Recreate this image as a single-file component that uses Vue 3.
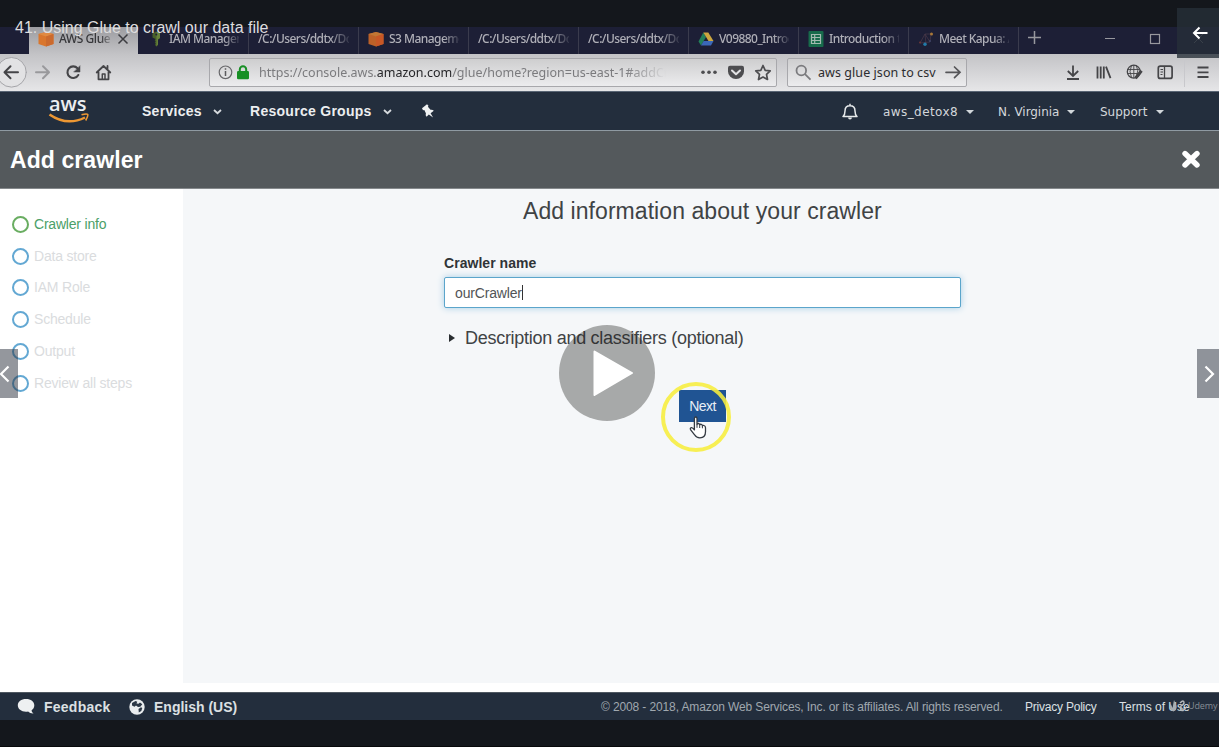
<script setup>
const tabs = [
  { label: '/C:/Users/ddtx/Dow', icon: '' },
  { label: 'S3 Managemen', icon: 'cube' },
  { label: '/C:/Users/ddtx/Dow', icon: '' },
  { label: '/C:/Users/ddtx/Dow', icon: '' },
  { label: 'V09880_Introdu', icon: 'drive' },
  { label: 'Introduction to', icon: 'sheet' },
  { label: 'Meet Kapua: A', icon: 'kapua' },
]
const steps = ['Crawler info', 'Data store', 'IAM Role', 'Schedule', 'Output', 'Review all steps']
</script>

<template>
  <div class="player">
    <div class="frame">
      <div class="tabs">
        <div class="tab active">
          <svg class="fav" viewBox="0 0 16 16"><path d="M.5 3 8 1l7.500 2v10L8 15.500.5 13z" fill="#d9762d" /><path d="M.5 3 8 5.500 15.500 3 8 1z" fill="#e08a42" /><path d="M8 5.500 15.500 3v10L8 15.500z" fill="#cb6a2e" /></svg>
          <span class="label short">AWS Glue C</span>
          <svg class="close" viewBox="0 0 12 12"><path d="M1.500 1.500l9 9m0-9l-9 9" fill="none" stroke="#3c3c40" stroke-width="1.500" /></svg>
        </div>
        <div class="tab iam">
          <svg class="fav" viewBox="0 0 16 16"><path d="M4.500 2.500 8 .5l4 2v4.500l-2 1.500v5L8.500 15.500 7 14l.7-1.500-1-1 1-1-1-1 .8-1.500-3-1.500z" fill="#48602a" /><path d="M8.500.8l3.500 1.700v4.500l-2 1.500v5l-1.500 2z" fill="#67813b" /><circle cx="8.300" cy="3.500" r="1" fill="#20213a" /></svg>
          <span class="label">IAM Managem</span>
        </div>
        <div v-for="(t, i) in tabs" :key="i" class="tab">
          <svg v-if="t.icon === 'cube'" class="fav" viewBox="0 0 16 16"><path d="M.5 3 8 1l7.500 2v10L8 15.500.5 13z" fill="#bd6128" /><path d="M.5 3 8 5.500 15.500 3 8 1z" fill="#c27634" /><path d="M8 5.500 15.500 3v10L8 15.500z" fill="#c85726" /></svg>
          <svg v-if="t.icon === 'drive'" class="fav" viewBox="0 0 16 16"><path d="M5.300 1.500 0.500 10.500 3 14.500 8 6z" fill="#22805a" /><path d="M5.300 1.500h5L15.500 10h-5z" fill="#cba63f" /><path d="M3 14.500 5.600 10h9.900L13 14.500z" fill="#3b68b8" /></svg>
          <svg v-if="t.icon === 'sheet'" class="fav" viewBox="0 0 16 16"><rect x=".5" width="15" height="16" rx="1" fill="#176b4b" /><path d="M3.500 3.500h9v9h-9zM3.500 6.500h9m-9 3h9M6.700 3.500v9" fill="none" stroke="#a3bab0" stroke-width="1.200" /></svg>
          <svg v-if="t.icon === 'kapua'" class="fav" viewBox="0 0 16 16"><path d="M2 12 7 3l5 8z M7 3l1 10 M7 3l6 0-1 8" fill="none" stroke="#4c3a49" stroke-width=".7" /><circle cx="13.500" cy="3" r="1.500" fill="#a87838" /><circle cx="7" cy="13.300" r="1.700" fill="#227ba8" /><circle cx="2" cy="11.500" r="1" fill="#6b3638" /><circle cx="12" cy="10" r="1.100" fill="#3c4164" /></svg>
          <span class="label">{{ t.label }}</span>
        </div>
        <div class="windowbar">
          <svg width="200" height="27" viewBox="1019 27 200 27" fill="none" stroke="#98989e">
            <path d="M1034.500 31v13M1028 37.500h13" stroke-width="1.500" />
            <path d="M1105 38.500h10" /><rect x="1150.500" y="34.500" width="9" height="9" stroke-width="1.200" /><path d="M1194 34l9 9m0-9l-9 9" stroke-width=".8" />
          </svg>
        </div>
      </div>

      <div class="toolbar">
        <svg class="navicons" width="209" height="37" viewBox="0 54 209 37" fill="none" stroke="#454548" stroke-width="2" stroke-linecap="round" stroke-linejoin="round">
          <circle cx="11.500" cy="72.300" r="14.800" fill="#e2e2e4" stroke="#a5a5a9" stroke-width="1" />
          <path d="M5 72.300h13M10.500 66.300l-6 6 6 6" />
          <path d="M36 72.300h12.500M43 66.300l6 6-6 6" stroke="#99999c" />
          <path d="M77.500 68.200A5.800 5.800 0 1 0 78.300 75" stroke-width="2.100" /><path d="M80 66v6h-6z" fill="#454548" stroke-width=".5" />
          <path d="M96.700 72.500l6.800-6.500 6.800 6.500M98.500 72v7.300h10v-7.300M107.500 66v2.500" stroke-width="1.800" /><path d="M102.300 79v-5h2.700v5" stroke-width="1.500" />
        </svg>
        <div class="field url">
          <svg width="48" height="27" viewBox="210 59 48 27" fill="none"><circle cx="225.500" cy="72.300" r="6.300" stroke="#68686b" stroke-width="1.200" /><path d="M225.500 71v5M225.500 68.200v1.600" stroke="#5b5b5e" stroke-width="1.500" /><rect x="237" y="71" width="12" height="8.300" rx="1.200" fill="#188f25" /><path d="M239.800 71.500v-2a3.200 3.200 0 0 1 6.400 0v2" stroke="#188f25" stroke-width="2" /></svg>
          <span class="address">https://console.aws.<b>amazon.com</b>/glue/home?region=us-east-1#addCr</span>
          <svg class="urlicons" width="84" height="27" viewBox="692 59 84 27"><g fill="#4d4d50"><circle cx="703" cy="72.300" r="1.800" /><circle cx="709" cy="72.300" r="1.800" /><circle cx="715" cy="72.300" r="1.800" /><path d="M730 65.800h12q2 0 2 2v3.700a8 7.500 0 0 1-16 0v-3.700q0-2 2-2z" /></g><path d="M732 70.500l4 3.800 4-3.800" fill="none" stroke="#e2e2e4" stroke-width="2" stroke-linecap="round" stroke-linejoin="round" /><path d="M763 65.500l2.200 4.800 5 .6-3.700 3.500 1 5.100-4.500-2.500-4.500 2.500 1-5.100-3.700-3.500 5-.6z" fill="none" stroke="#4d4d50" stroke-width="1.700" stroke-linejoin="round" /></svg>
        </div>
        <div class="field search">
          <svg width="30" height="27" viewBox="788 59 30 27" fill="none" stroke="#7b7b7e" stroke-width="1.800"><circle cx="801.300" cy="70.500" r="4.800" /><path d="M805 74.200l5.500 5.500" /></svg>
          <span class="query">aws glue json to csv</span>
          <svg width="24" height="27" viewBox="942 59 24 27" fill="none" stroke="#555558" stroke-width="1.700" stroke-linecap="round"><path d="M946 72.300h13.500M954.500 67l5.500 5.300-5.500 5.400" /></svg>
        </div>
        <svg class="actions" width="252" height="37" viewBox="967 54 252 37" fill="none" stroke="#454548" stroke-width="1.800">
          <path d="M1073 65.500v10M1067.800 71l5.200 5 5.200-5M1067 79h12" />
          <path d="M1097.500 66.500v12M1100.700 66.500v12M1103.800 66.500v12M1106 66.700l4.500 11.500" />
          <circle cx="1133.800" cy="71.700" r="6.500" stroke-width="1.300" /><path d="M1127 69.500h12.500M1127 73.500h12M1133.800 65v13M1131.500 65.500q-3 6 0 12M1136.300 65.500q3 5 0 11" stroke-width=".9" /><path d="M1141.500 70.800l-6 7.500" stroke-width="3" />
          <rect x="1158.300" y="66.200" width="13.800" height="12.200" rx="2" stroke-width="1.700" /><path d="M1164.500 66v12" stroke-width="1.300" /><path d="M1160.500 69.500h2.500m-2.500 2.500h2.500m-2.500 2.500h2" stroke-width="1" />
          <path d="M1184.500 58v29" stroke="#c8c8cc" stroke-width="1" />
          <path d="M1197.500 67.500h11M1197.500 72.300h11M1197.500 77h11" />
        </svg>
      </div>

      <div class="awsnav">
        <div class="logo">
          <span>aws</span>
          <svg width="42" height="12" viewBox="48 112 42 12" fill="none" stroke="#ed9733"><path d="M49.500 113.500q17.500 12 35.500 3" stroke-width="2.500" /><path d="M81.500 113.800q5.500-1.500 6.200-.3t-2 6" stroke-width="1.600" /></svg>
        </div>
        <span class="navlink services">Services</span>
        <svg class="chev" width="9" height="6" viewBox="0 0 9 6"><path d="M1 1l3.500 3.200L8 1" /></svg>
        <span class="navlink groups">Resource Groups</span>
        <svg class="chev" width="9" height="6" viewBox="0 0 9 6"><path d="M1 1l3.500 3.200L8 1" /></svg>
        <svg class="pin" width="14" height="14" viewBox="0 0 14 14"><path d="M1 4.300 6 .3l1.500 1.500-.6 1L9.500 5.800q2-.4 3.300 1L9.600 9.300l2.500 4.200-4.300-2.900-2.200 2.200q-1.500-1.600-.7-3.600L3.300 6l-1.300.2z" fill="#f0f2f3" /></svg>
        <svg class="bell" width="18" height="18" viewBox="0 0 18 18"><path d="M2 13.500c1.600-1.300 2-3 2-5.500 0-3.300 1.700-5.200 5-5.200s5 1.900 5 5.200c0 2.500.4 4.200 2 5.500zM9 2.500V.8" fill="none" stroke="#e7eaec" stroke-width="1.500" stroke-linejoin="round" /><path d="M7 14.500h4q-.3 2-2 2t-2-2z" fill="#e7eaec" /></svg>
        <span class="menu account">aws_detox8</span><i class="caret"></i>
        <span class="menu region">N. Virginia</span><i class="caret"></i>
        <span class="menu support">Support</span><i class="caret"></i>
      </div>

      <header class="titlebar">
        <h1>Add crawler</h1>
        <svg width="20" height="20" viewBox="0 0 20 20"><path d="M4 3.500l12 11.500M16 3.500L4 15" stroke="#fff" stroke-width="5.400" stroke-linecap="round" /></svg>
      </header>

      <div class="body">
        <aside>
          <div v-for="(s, i) in steps" :key="s" class="step" :class="{ current: i === 0 }"><i></i><span>{{ s }}</span></div>
        </aside>
        <main>
          <h2>Add information about your crawler</h2>
          <div class="form">
            <label>Crawler name</label>
            <div class="input"><span>ourCrawler</span><i></i></div>
            <div class="details"><i></i><span>Description and classifiers (optional)</span></div>
          </div>
          <div class="next">Next</div>
        </main>
      </div>

      <footer>
        <svg class="bubble" width="18" height="17" viewBox="0 0 18 17"><path d="M9 1c5 0 8.300 2.600 8.300 6.300 0 2.200-1 3.800-2.700 5 0 1.400.7 2.300 1.900 3.200-2.400.1-4.100-.7-5.400-2Q10 13.700 9 13.700C4.200 13.700.8 11 .8 7.300S4.200 1 9 1z" fill="#eef0f1" /></svg>
        <span class="flink feedback">Feedback</span>
        <svg class="globe" width="16" height="16" viewBox="0 0 16 16"><circle cx="8" cy="8" r="7.700" fill="#e9ecee" /><path d="M3 4 6.500 2l1.800.8L7.500 4.500l2 .3 1.500-1.300 2.300 1.700-2 2.500L9 8 7 6.500 5.500 7.800 3 6.500zM9.500 10l2.500-1.800 1.300.8-1 3-2.500 1.500z" fill="#2b3745" /></svg>
        <span class="flink language">English (US)</span>
        <span class="copyright">© 2008 - 2018, Amazon Web Services, Inc. or its affiliates. All rights reserved.</span>
        <span class="policy">Privacy Policy</span>
        <span class="terms">Terms of Use</span>
      </footer>
    </div>

    <div class="lecture">41. Using Glue to crawl our data file</div>
    <div class="back"><svg width="18" height="16" viewBox="0 0 18 16"><path d="M16.500 8H3M8.500 2.500 3 8l5.500 5.500" fill="none" stroke="#fff" stroke-width="2" /></svg></div>
    <div class="side previous"><svg width="12" height="18" viewBox="0 0 12 18"><path d="M9.500 1.500 2 9l7.500 7.500" /></svg></div>
    <div class="side following"><svg width="12" height="18" viewBox="0 0 12 18"><path d="M2.500 1.500 10 9 2.500 16.500" /></svg></div>
    <div class="play"><svg width="96" height="96" viewBox="0 0 96 96"><path d="M35.500 26.500 73 48 35.500 70z" fill="#fff" stroke="#fff" stroke-width="2" stroke-linejoin="round" /></svg></div>
    <div class="halo"></div>
    <svg class="hand" width="19" height="23" viewBox="0 0 19 23"><path d="M5.400 12.800V2.500q.1-1.500 1.300-1.500T8 2.500v6q.4-1.200 1.500-1t1.200 1.500q.5-.9 1.600-.7t1.100 1.600q.6-.7 1.500-.4 1.600.5 1.600 2.300v4c0 3.600-2 6-5.600 6-2.600 0-4.200-1-5.300-3L1.500 13.600q-.6-1.600.8-2 1.400-.2 3.100 2.300z" fill="#fff" stroke="#343a42" stroke-width="1.300" stroke-linejoin="round" /><path d="M8 8.500v3.300M10.700 9.200v2.800M13.400 10v2.300" stroke="#343a42" /></svg>
    <div class="udemy"><svg width="20" height="14" viewBox="0 0 20 14"><path d="M2.500 4q-2 7 3 8.500Q10.500 10 7.300 4L6 1 4.500 9z" fill="#a7adb2" /><path d="M12 4q4-4 4 0-.5 2-3 3-2 5 2 4.500l4-4" fill="none" stroke="#b5babe" stroke-width="1.500" /></svg><span>Udemy</span></div>
  </div>
</template>

<style>
body { margin: 0; overflow: hidden; background: #14171c; }
</style>

<style scoped>
* { box-sizing: border-box; }
.player { position: relative; width: 1219px; height: 747px; padding-top: 27px; overflow: hidden; background: #14171c; border-bottom: 1px solid #08090b; font-family: "Liberation Sans", Arial, sans-serif; }
svg { display: block; flex: none; }
.frame { height: 693px; display: flex; flex-direction: column; background: #fff; }
span { white-space: nowrap; }

.tabs { height: 27px; flex: none; display: flex; padding-left: 29px; background: #1d1f36; font: 500 12px/23px "Noto Sans", "Open Sans", sans-serif; color: #b0b0b8; }
.tab { width: 110px; flex: none; display: flex; align-items: flex-start; padding: 0 9px; border-right: 1px solid #3a3b4d; overflow: hidden; }
.tab.active { width: 109px; border: 0; background: linear-gradient(#9c9ca0, #c3c3c6); color: #38383b; }
.tab.iam { width: 111px; padding-left: 10px; }
.fav { width: 16px; height: 16px; margin: 4px 5px 0 0; }
.label { flex: 1; overflow: hidden; letter-spacing: -.55px; mask-image: linear-gradient(90deg, #000 78%, transparent 104%); }
.label.short { flex: none; width: 53px; letter-spacing: -.45px; }
.close { width: 12px; height: 12px; margin: 6px 0 0 5px; }
.windowbar { width: 200px; flex: none; }

.toolbar { height: 37px; flex: none; display: flex; align-items: center; background: linear-gradient(#c3c3c6, #e6e6e8); }
.field { height: 29px; flex: none; display: flex; border: 1px solid #a8a8ac; border-radius: 2px; background: linear-gradient(#cececf, #ececee); font: 12.500px/28px "Noto Sans", "Open Sans", sans-serif; }
.url { width: 568px; margin-right: 10px; }
.address { width: 407px; margin-left: 1px; overflow: hidden; color: #7b7b7e; mask-image: linear-gradient(90deg, #000 90%, transparent 100%); }
.address b { font-weight: 400; color: #252528; }
.urlicons { margin-left: auto; }
.search { width: 180px; color: #2c2c2f; }
.query { width: 124px; letter-spacing: .06px; }

.awsnav { height: 40px; flex: none; display: flex; align-items: center; background: #232e3d; border-top: 1px solid #596574; border-bottom: 1px solid #8f9aa2; color: #eceef0; }
.logo { width: 42px; margin-left: 48px; align-self: flex-start; }
.logo span { display: block; height: 21px; padding-left: 1px; font: 600 20px/24px "Open Sans", sans-serif; letter-spacing: -.1px; }
.navlink { font-weight: 700; font-size: 14px; line-height: 20px; letter-spacing: .28px; }
.services { width: 61px; margin-left: 52px; }
.groups { width: 123px; margin-left: 28px; }
.chev { margin: 2px 0 0 10px; fill: none; stroke: #d7dbdf; stroke-width: 1.800; }
.pin { margin-left: 29px; }
.bell { margin: 1px 0 0 406px; }
.menu { padding-top: 2px; font: 12px/18px "DejaVu Sans", Verdana, sans-serif; color: #d3d7db; }
.account { width: 75px; margin-left: 24px; letter-spacing: .42px; }
.region { width: 61px; margin-left: 24px; letter-spacing: -.05px; }
.support { width: 48px; margin-left: 25px; }
.caret { margin: 1px 0 0 8px; border: 4px solid transparent; border-top-color: #d2d7db; border-bottom: 0; }

.titlebar { height: 58px; flex: none; display: flex; align-items: center; justify-content: space-between; padding: 0 18px 0 10px; background: #54595c; border-bottom: 1px solid #85898c; }
h1 { margin: 0; font-size: 23px; line-height: 30px; letter-spacing: .08px; color: #fff; }
.body { flex: 1; display: flex; padding-bottom: 9px; min-height: 0; }
aside { width: 183px; flex: none; padding: 19.500px 0 0 12px; }
.step { height: 31.800px; display: flex; align-items: center; font-size: 14px; letter-spacing: -.2px; color: #dadcde; }
.step span { margin-top: -1px; }
.step i { width: 17px; height: 17px; margin-right: 5px; border: 2px solid #63a8d3; border-radius: 50%; }
.step.current { color: #4ba068; }
.step.current i { border-color: #69ad61; }
main { flex: 1; background: #f5f7f9; color: #3f4345; }
h2 { width: 360px; margin: 7px 0 0 340px; font-size: 23px; line-height: 30px; font-weight: 400; letter-spacing: .06px; white-space: nowrap; }
.form { width: 517px; margin: 26px 0 0 261px; }
label { display: block; height: 25px; font-size: 14px; line-height: 23px; font-weight: 700; letter-spacing: .04px; color: #303437; }
.input { height: 31px; display: flex; align-items: center; padding-left: 10px; background: #fff; border: 1px solid #5ba5cb; border-radius: 2px; box-shadow: 0 0 7px #a6cde5; font-size: 14px; letter-spacing: -.16px; color: #515456; }
.input i { width: 1px; height: 15px; background: #333; }
.details { height: 30px; margin-top: 15px; display: flex; align-items: center; font-size: 18px; letter-spacing: -.28px; }
.details i { margin: 0 10px 0 5px; border: 4px solid transparent; border-left: 6px solid #292d30; border-right: 0; }
.next { width: 47px; height: 32px; margin: 37px 0 0 496px; background: #205493; color: #e8eef6; font-size: 14px; line-height: 33px; letter-spacing: -.6px; text-align: center; }

footer { height: 28px; flex: none; display: flex; align-items: center; background: #232e3d; border-top: 1px solid #4f5861; color: #dce0e3; }
.bubble { margin-left: 17px; }
.flink { font-size: 14px; line-height: 20px; font-weight: 700; }
.feedback { width: 67px; margin-left: 9px; letter-spacing: .24px; }
.globe { margin-left: 18px; }
.language { width: 83px; margin-left: 9px; }
.copyright { width: 402px; margin-left: 364px; font-size: 12px; letter-spacing: -.12px; color: #a0a8af; }
.policy { width: 72px; margin-left: 22px; font-size: 12px; letter-spacing: -.22px; }
.terms { width: 74px; margin-left: 22px; font-size: 12px; }

.lecture { position: absolute; left: 15px; top: 17px; font-size: 16px; line-height: 21px; white-space: nowrap; color: #deddde; }
.back { position: absolute; left: 1177px; top: 8px; width: 42px; height: 50px; display: flex; align-items: center; padding-left: 14px; background: rgba(38,47,57,.78); }
.side { position: absolute; top: 349px; height: 49px; display: flex; align-items: center; background: rgba(41,48,59,.5); }
.side path { fill: none; stroke: #fff; stroke-width: 2.200; }
.previous { left: 0; width: 18px; }
.previous svg { margin-left: -1px; }
.following { right: 0; width: 22px; padding-left: 6px; }
.play { position: absolute; left: 559px; top: 325px; width: 96px; height: 96px; border-radius: 50%; background: rgba(30,30,28,.36); }
.halo { position: absolute; left: 661px; top: 382px; width: 70px; height: 70px; border: 4px solid rgba(247,238,60,.88); border-radius: 50%; }
.hand { position: absolute; left: 689px; top: 416px; }
.udemy { position: absolute; left: 1168px; top: 699px; display: flex; align-items: center; font: 9px/14px "Open Sans", sans-serif; color: #858d95; }
.udemy span { letter-spacing: -.1px; }
</style>
